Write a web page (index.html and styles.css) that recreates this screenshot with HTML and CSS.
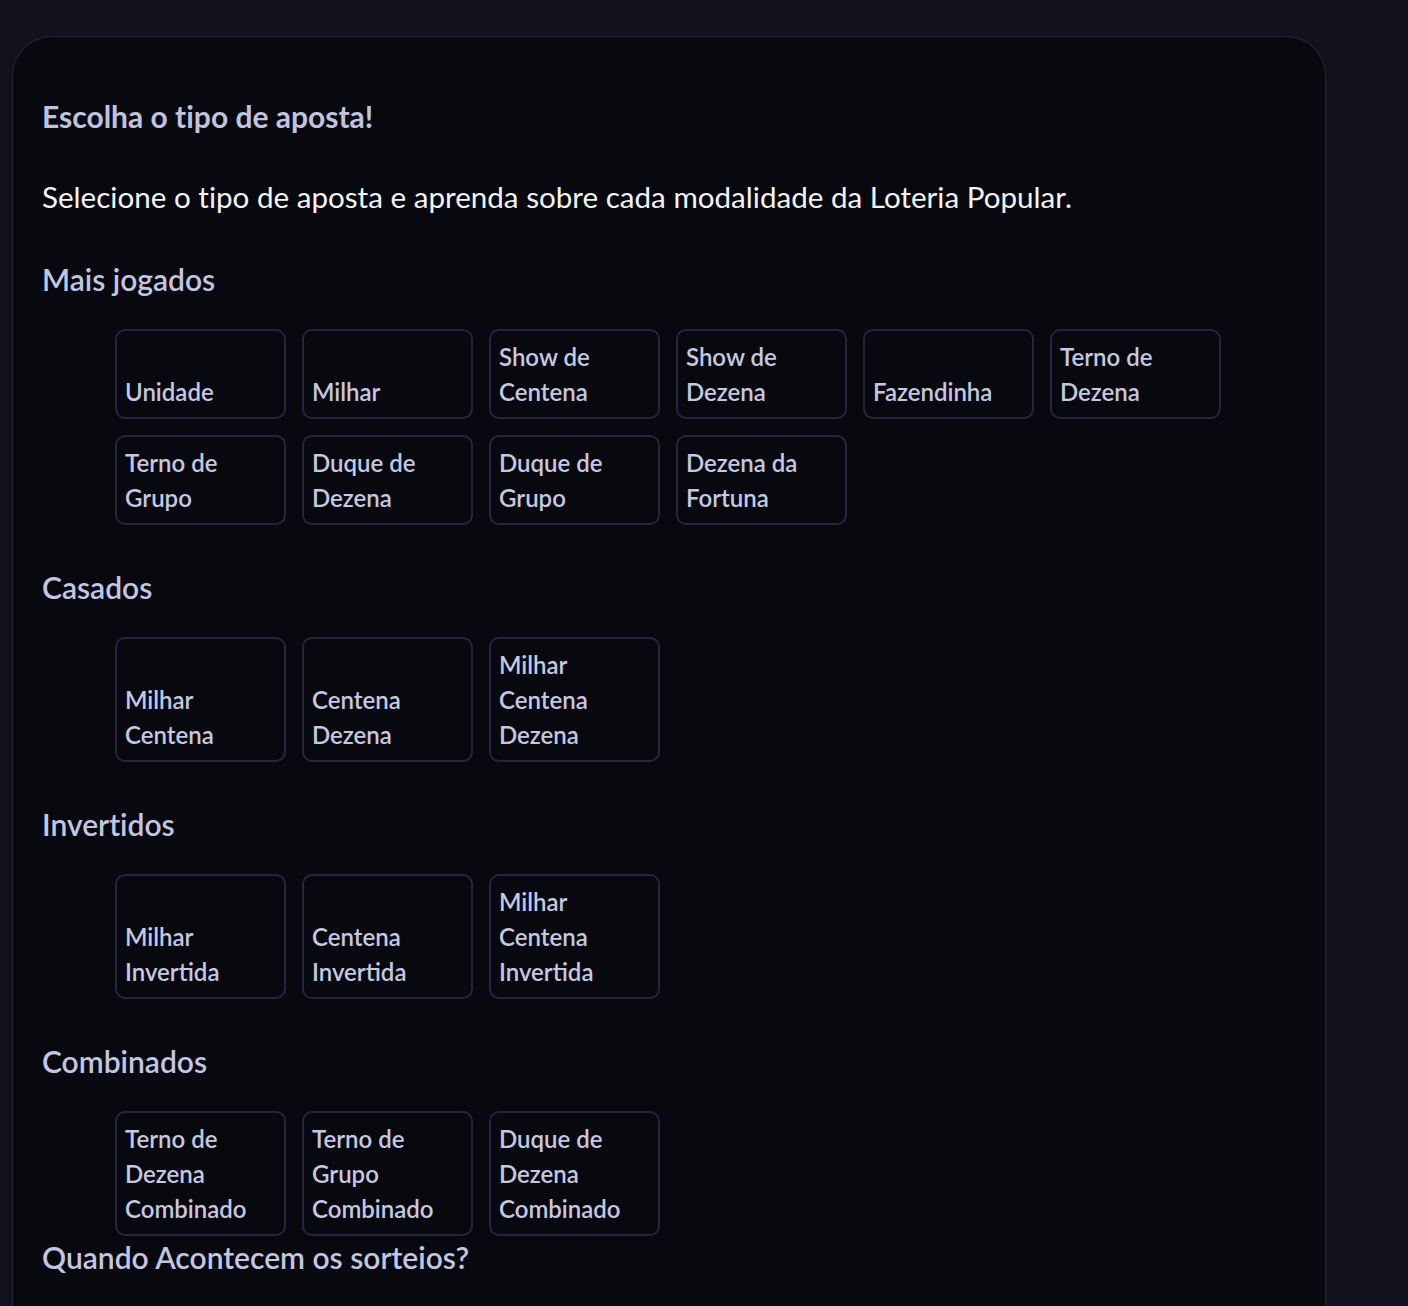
FILE: index.html
```html
<!DOCTYPE html>
<html lang="pt-BR">
<head>
<meta charset="utf-8">
<title>Escolha o tipo de aposta</title>
<link rel="stylesheet" href="styles.css">
</head>
<body>
<main class="page">
  <section class="card">
    <h1 class="title">Escolha o tipo de aposta!</h1>
    <p class="lead">Selecione o tipo de aposta e aprenda sobre cada modalidade da Loteria Popular.</p>

    <h2 class="group-title">Mais jogados</h2>
    <div class="bet-grid">
      <button class="bet">Unidade</button>
      <button class="bet">Milhar</button>
      <button class="bet">Show de Centena</button>
      <button class="bet">Show de Dezena</button>
      <button class="bet">Fazendinha</button>
      <button class="bet">Terno de Dezena</button>
      <button class="bet">Terno de Grupo</button>
      <button class="bet">Duque de Dezena</button>
      <button class="bet">Duque de Grupo</button>
      <button class="bet">Dezena da Fortuna</button>
    </div>

    <h2 class="group-title">Casados</h2>
    <div class="bet-grid">
      <button class="bet">Milhar Centena</button>
      <button class="bet">Centena Dezena</button>
      <button class="bet">Milhar Centena Dezena</button>
    </div>

    <h2 class="group-title">Invertidos</h2>
    <div class="bet-grid">
      <button class="bet">Milhar Invertida</button>
      <button class="bet">Centena Invertida</button>
      <button class="bet">Milhar Centena Invertida</button>
    </div>

    <h2 class="group-title">Combinados</h2>
    <div class="bet-grid">
      <button class="bet">Terno de Dezena Combinado</button>
      <button class="bet">Terno de Grupo Combinado</button>
      <button class="bet">Duque de Dezena Combinado</button>
    </div>

    <h2 class="group-title group-title--tight">Quando Acontecem os sorteios?</h2>
  </section>
</main>
</body>
</html>
```

FILE: styles.css
```css
html, body {
  margin: 0;
  padding: 0;
  background: #11121d;
}

body {
  font-family: Lato, "Noto Sans", "DejaVu Sans", sans-serif;
  font-variant-ligatures: none;
  color: #c3c6e2;
}

.page {
  padding: 36px 82px 0 12px;
}

.card {
  background: #08090e;
  border: 1px solid #22243a;
  border-bottom: none;
  border-radius: 40px 40px 0 0;
  padding: 59px 30px 40px 29px;
  min-height: 1330px;
  box-sizing: border-box;
}

.title {
  margin: 0;
  font-size: 30px;
  line-height: 40px;
  font-weight: 700;
  color: #c0c3df;
}

.lead {
  margin: 41px 0 2px;
  font-size: 29.6px;
  line-height: 40px;
  font-weight: 400;
  color: #f4f4f7;
}

.group-title {
  margin: 41px 0 0;
  padding-top: 1px;
  font-size: 30px;
  line-height: 40px;
  font-weight: 600;
  color: #c3c6e2;
}

.group-title--tight {
  margin-top: 0;
}

.bet-grid {
  display: grid;
  grid-template-columns: repeat(6, 171px);
  gap: 16px;
  margin: 30px 0 0 73px;
}

.bet {
  display: flex;
  flex-direction: column;
  justify-content: flex-end;
  align-items: flex-start;
  text-align: left;
  box-sizing: border-box;
  padding: 8px;
  background: transparent;
  border: 2px solid #25263e;
  border-radius: 10px;
  font-family: inherit;
  font-size: 24px;
  line-height: 35px;
  font-weight: 600;
  color: #c5c8e0;
  cursor: pointer;
}
```
